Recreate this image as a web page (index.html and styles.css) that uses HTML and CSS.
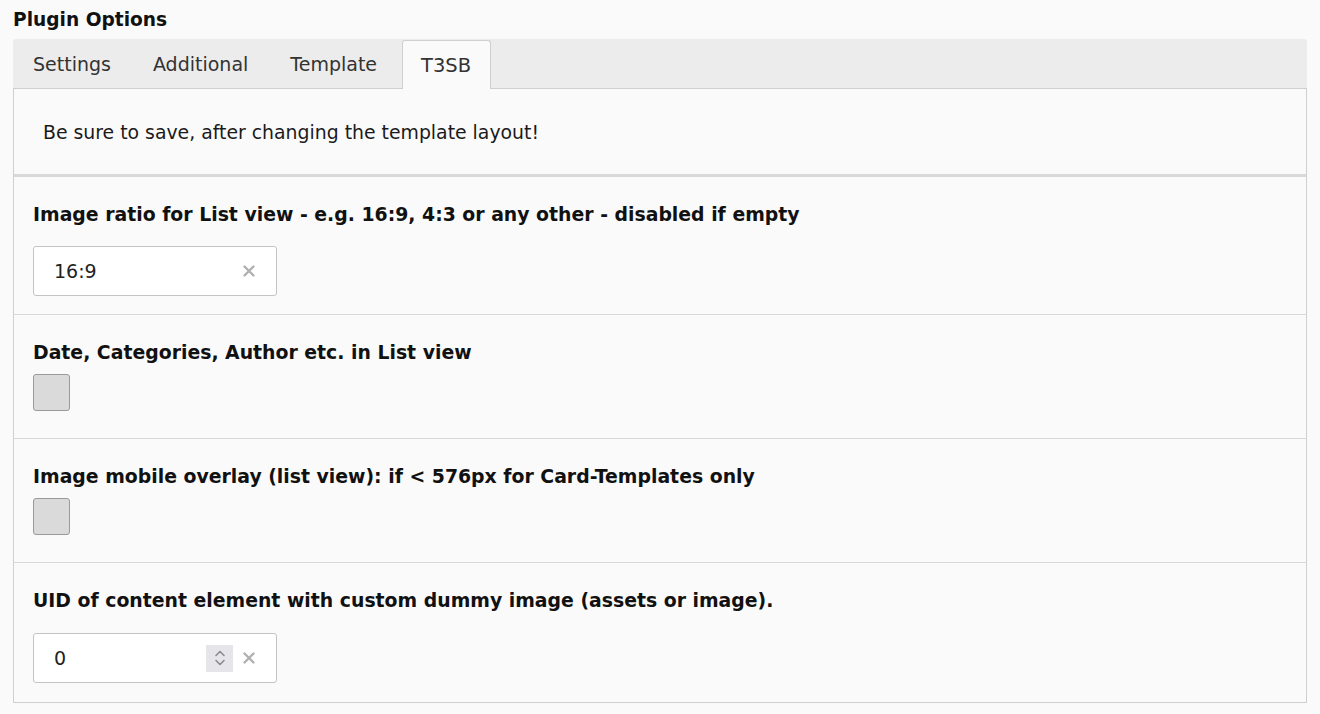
FILE: index.html
```html
<!DOCTYPE html>
<html>
<head>
<meta charset="utf-8">
<link rel="stylesheet" href="styles.css">
</head>
<body>
<h1 class="title">Plugin Options</h1>
<div class="tabs">
  <div class="tab">Settings</div>
  <div class="tab">Additional</div>
  <div class="tab">Template</div>
  <div class="tab active">T3SB</div>
</div>
<div class="panel">
  <div class="info">Be sure to save, after changing the template layout!</div>
  <div class="field">
    <div class="label">Image ratio for List view - e.g. 16:9, 4:3 or any other - disabled if empty</div>
    <div class="input">
      <span class="value">16:9</span>
      <svg class="clear" width="12" height="12" viewBox="0 0 12 12"><path d="M1.5 1.5 L10.5 10.5 M10.5 1.5 L1.5 10.5" stroke="#b0b0b0" stroke-width="2.4" stroke-linecap="round"/></svg>
    </div>
  </div>
  <div class="field check-field">
    <div class="label">Date, Categories, Author etc. in List view</div>
    <div class="checkbox"></div>
  </div>
  <div class="field check-field">
    <div class="label">Image mobile overlay (list view): if &lt; 576px for Card-Templates only</div>
    <div class="checkbox"></div>
  </div>
  <div class="field last">
    <div class="label">UID of content element with custom dummy image (assets or image).</div>
    <div class="input">
      <span class="value">0</span>
      <span class="spin">
        <svg width="12" height="20" viewBox="0 0 12 20"><path d="M2 7.5 L6 3.5 L10 7.5" fill="none" stroke="#8a8a95" stroke-width="1.6" stroke-linecap="round" stroke-linejoin="round"/><path d="M2 12.5 L6 16.5 L10 12.5" fill="none" stroke="#8a8a95" stroke-width="1.6" stroke-linecap="round" stroke-linejoin="round"/></svg>
      </span>
      <svg class="clear" width="12" height="12" viewBox="0 0 12 12"><path d="M1.5 1.5 L10.5 10.5 M10.5 1.5 L1.5 10.5" stroke="#b0b0b0" stroke-width="2.4" stroke-linecap="round"/></svg>
    </div>
  </div>
</div>
</body>
</html>
```
FILE: styles.css
```css
html, body {
  margin: 0;
  background: #fafafa;
}
body {
  padding: 0 13px;
  font-family: "DejaVu Sans", Verdana, sans-serif;
  color: #1a1a1a;
}
.title {
  margin: 0;
  height: 39px;
  line-height: 39px;
  font-size: 18.6px;
  font-weight: bold;
  color: #111;
}
.tabs {
  display: flex;
  height: 50px;
  box-sizing: border-box;
  background: #ececec;
  border-radius: 3px 3px 0 0;
  border-bottom: 1px solid #cfcfcf;
}
.tab {
  padding: 2px 22px 0 20px;
  font-size: 19px;
  line-height: 47px;
  color: #333;
}
.tab.active {
  margin-top: 1px;
  margin-left: 3px;
  padding: 1px 19px 0 18px;
  line-height: 47px;
  height: 49px;
  box-sizing: border-box;
  background: #fafafa;
  border: 1px solid #cfcfcf;
  border-bottom: none;
  border-radius: 3px 3px 0 0;
  font-size: 19.5px;
}
.panel {
  border: 1px solid #cfcfcf;
  border-top: none;
  background: #fafafa;
}
.info {
  height: 85px;
  padding-left: 29px;
  line-height: 87px;
  font-size: 18.85px;
  border-bottom: 3px solid #d9d9d9;
}
.field {
  padding: 28px 19px 18px;
  border-bottom: 1px solid #d9d9d9;
}
.field.last {
  border-bottom: none;
  padding-bottom: 19px;
}
.check-field {
  padding-bottom: 27px;
}
.label {
  font-size: 18.85px;
  font-weight: bold;
  line-height: 20px;
  color: #111;
}
.input {
  margin-top: 21px;
  width: 244px;
  height: 50px;
  box-sizing: border-box;
  background: #fff;
  border: 1px solid #c4c4c4;
  border-radius: 3px;
  display: flex;
  align-items: center;
  padding: 0 21px 0 20px;
  font-size: 19px;
  color: #222;
}
.last .input {
  margin-top: 22px;
}
.value {
  flex: 1;
}
.spin {
  width: 27px;
  height: 27px;
  background: #e6e6ea;
  display: flex;
  align-items: center;
  justify-content: center;
  margin-right: 10px;
}
.clear {
  display: block;
}
.checkbox {
  margin-top: 11px;
  width: 37px;
  height: 37px;
  box-sizing: border-box;
  background: #dadada;
  border: 1px solid #9a9a9a;
  border-radius: 3px;
}
```
